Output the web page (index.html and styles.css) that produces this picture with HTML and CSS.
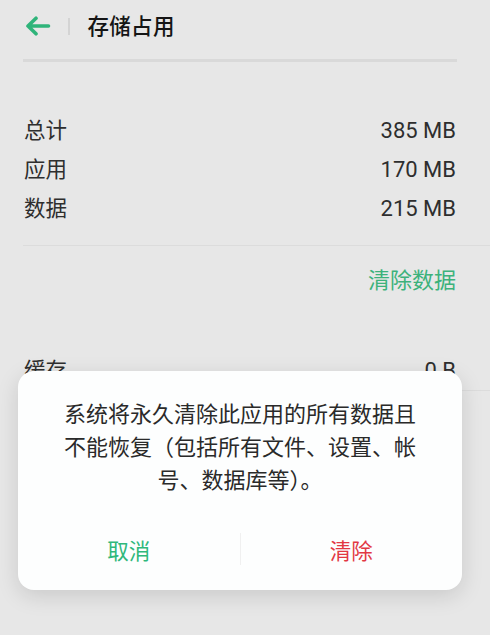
FILE: index.html
```html
<!DOCTYPE html>
<html lang="zh">
<head>
<meta charset="utf-8">
<link rel="stylesheet" href="styles.css">
</head>
<body>
<div class="page">
  <header class="header">
    <svg class="back" width="26" height="20" viewBox="0 0 26 20">
      <path d="M3 10 H23.5 M11 2.2 L3 10 L11 17.8" fill="none" stroke="#2fb47a" stroke-width="3.6" stroke-linecap="round" stroke-linejoin="round"/>
    </svg>
    <span class="vsep"></span>
    <h1 class="title">存储占用</h1>
  </header>
  <div class="bar"></div>
  <div class="stats">
    <div class="row"><span>总计</span><span class="val">385 MB</span></div>
    <div class="row"><span>应用</span><span class="val">170 MB</span></div>
    <div class="row"><span>数据</span><span class="val">215 MB</span></div>
  </div>
  <div class="divider"></div>
  <div class="action"><span class="link">清除数据</span></div>
  <div class="stats cache">
    <div class="row"><span>缓存</span><span class="val">0 B</span></div>
  </div>
  <div class="divider"></div>
</div>

<div class="dialog">
  <p class="msg">系统将永久清除此应用的所有数据且不能恢复（包括所有文件、设置、帐号、数据库等）。</p>
  <div class="buttons">
    <span class="btn cancel">取消</span>
    <span class="bsep"></span>
    <span class="btn danger">清除</span>
  </div>
</div>
</body>
</html>
```

FILE: styles.css
```css
html, body {
  margin: 0;
  padding: 0;
}
body {
  width: 490px;
  height: 635px;
  overflow: hidden;
  background: #e7e7e7;
  font-family: Roboto, "Noto Sans CJK SC", sans-serif;
  color: #333;
  position: relative;
}
.header {
  height: 52px;
  display: flex;
  align-items: center;
  padding-left: 25px;
}
.back {
  display: block;
}
.vsep {
  width: 1.5px;
  height: 17px;
  background: #d4d4d4;
  margin-left: 17px;
}
.title {
  margin: 0 0 4px 18px;
  font-size: 21.5px;
  font-weight: 500;
  color: #151515;
  letter-spacing: 0.3px;
}
.bar {
  margin: 7px 33px 0 23px;
  height: 3px;
  background: #d9d9d9;
}
.stats {
  padding: 0 34px 0 24px;
  margin-top: 49px;
}
.row {
  display: flex;
  justify-content: space-between;
  height: 39px;
  line-height: 39px;
  font-size: 21.5px;
  color: #2e2e2e;
}
.val {
  font-size: 22px;
}
.divider {
  margin: 17px 0 0 23px;
  height: 1px;
  background: #dcdcdc;
}
.action {
  display: flex;
  justify-content: flex-end;
  padding-right: 34px;
  height: 40px;
  line-height: 40px;
  margin-top: 15px;
}
.link {
  font-size: 22px;
  color: #3cb27b;
}
.stats.cache {
  margin-top: 50px;
}
.cache + .divider {
  margin-top: 0;
}
.dialog {
  position: absolute;
  left: 18px;
  top: 371px;
  width: 444px;
  height: 219px;
  background: #fdfefe;
  border-radius: 16px;
  box-shadow: 0 6px 22px rgba(0, 0, 0, 0.13);
  box-sizing: border-box;
  padding-top: 25px;
}
.msg {
  margin: 0;
  padding: 0 44px;
  text-align: center;
  font-size: 22px;
  line-height: 33px;
  color: #2a2a2a;
  font-family: "Noto Sans CJK SC", sans-serif;
}
.buttons {
  margin-top: 32px;
  height: 44px;
  display: flex;
  align-items: center;
}
.btn {
  flex: 1;
  text-align: center;
  font-size: 21.5px;
  font-family: "Noto Sans CJK SC", sans-serif;
}
.cancel {
  color: #2fb87b;
}
.danger {
  color: #e23843;
}
.bsep {
  width: 1px;
  height: 32px;
  background: #f0f0f0;
}
```
